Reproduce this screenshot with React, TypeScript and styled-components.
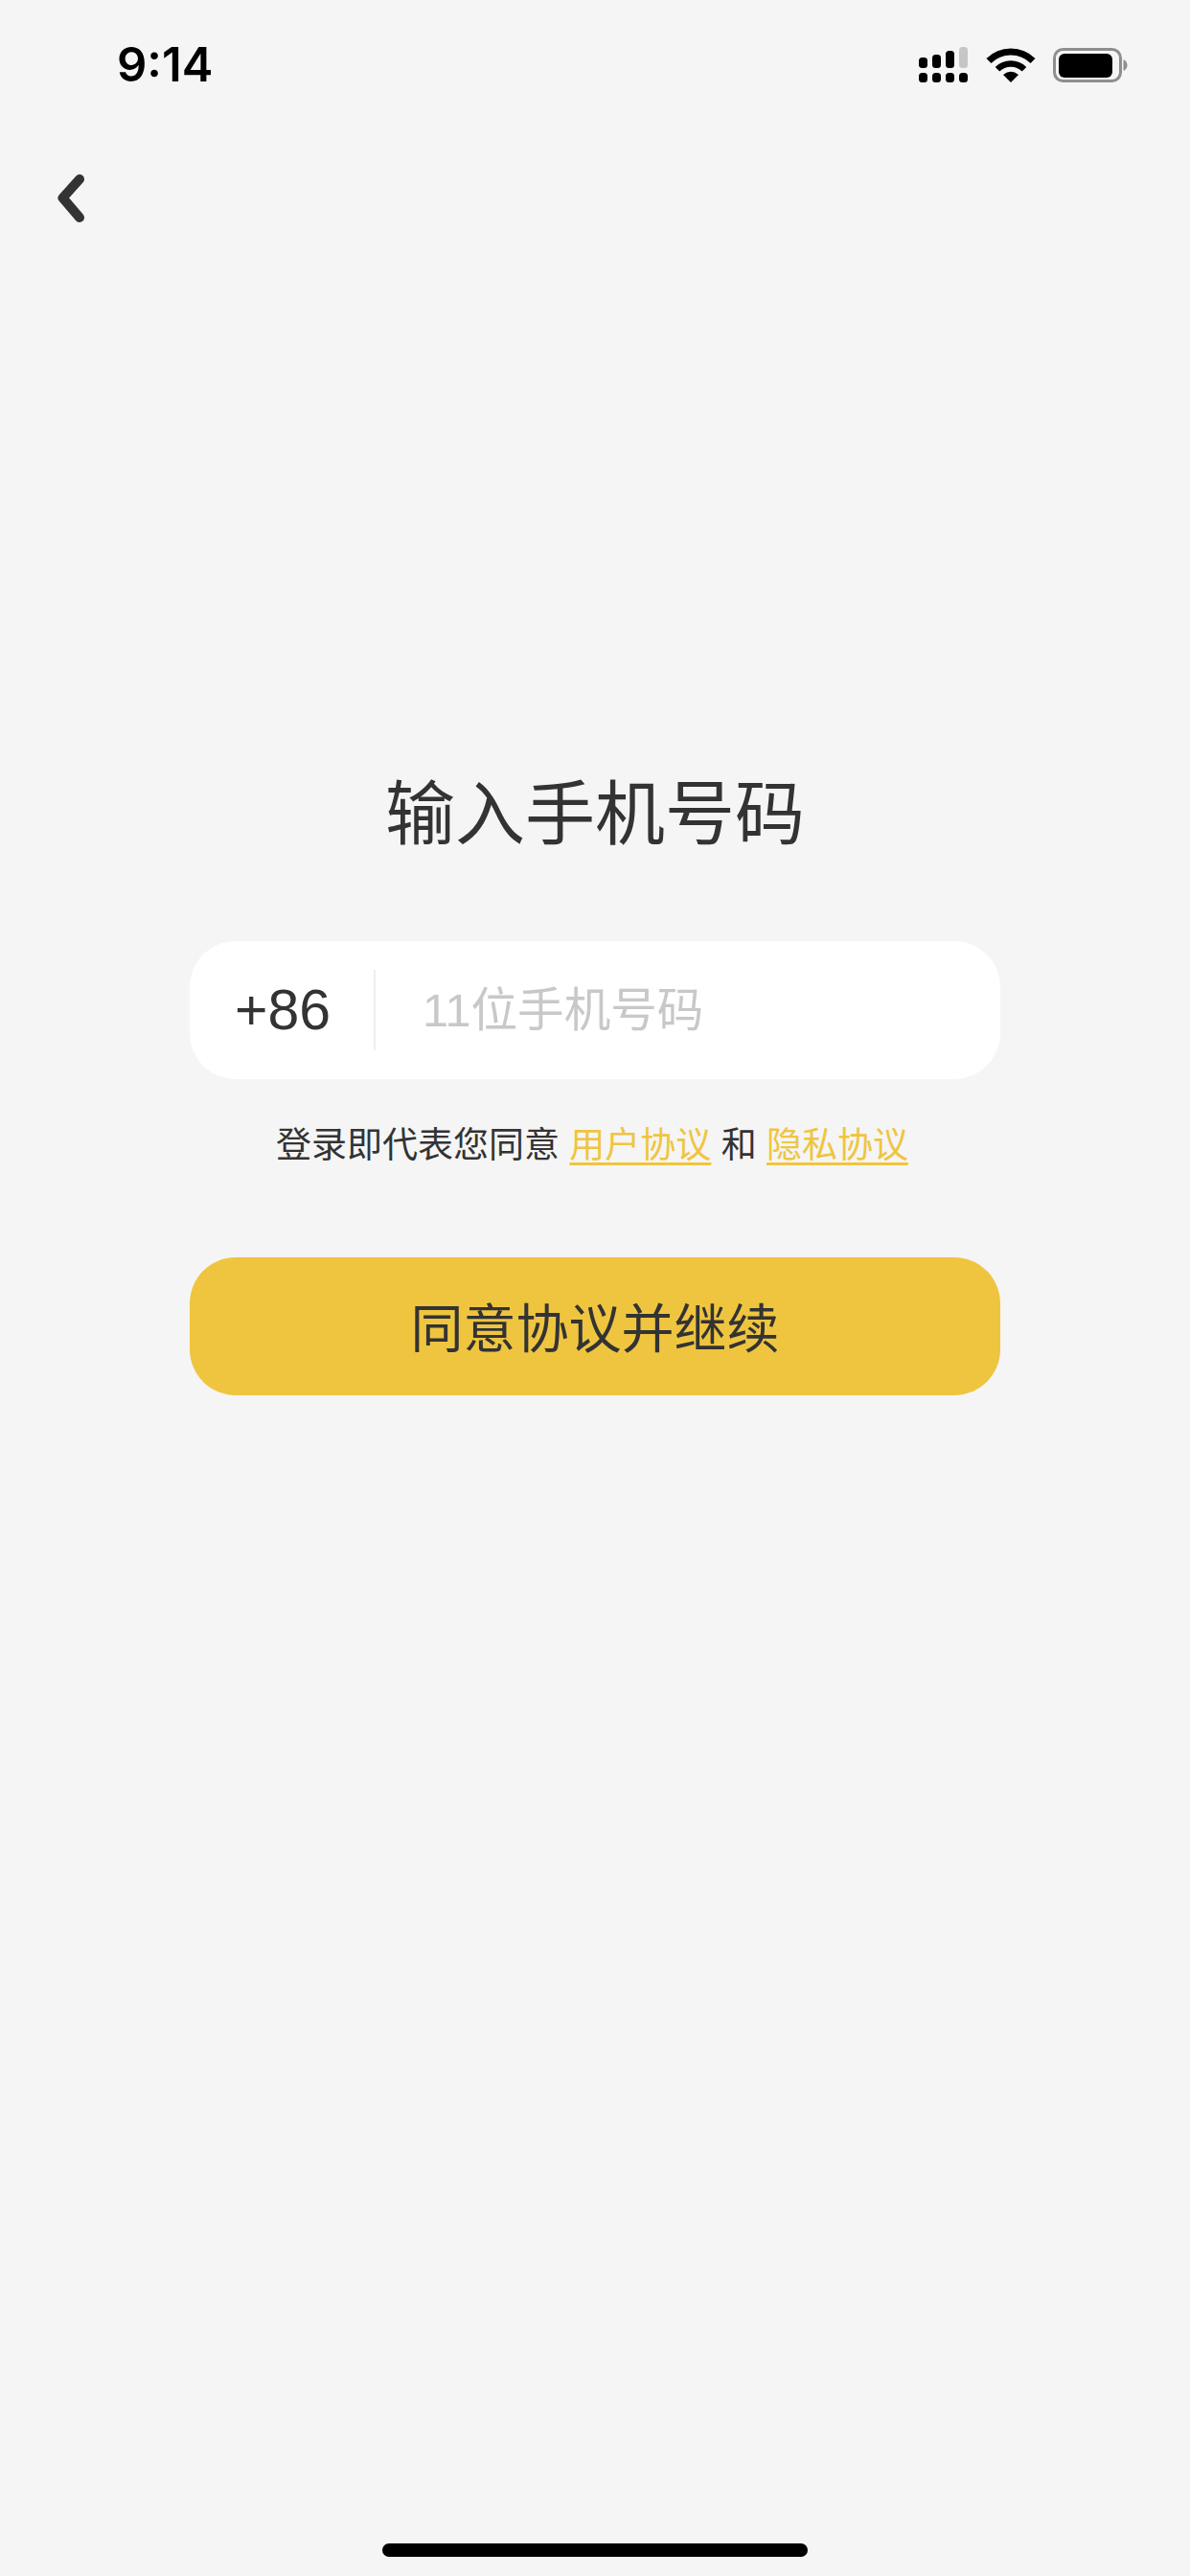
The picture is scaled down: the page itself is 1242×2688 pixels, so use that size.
import React, { useState } from 'react';
import styled, { createGlobalStyle } from 'styled-components';

const GlobalStyle = createGlobalStyle`
  html, body {
    margin: 0;
    padding: 0;
    background-color: #f5f5f5;
  }
  * {
    box-sizing: border-box;
  }
`;

const fontStack = `"Liberation Sans", "Noto Sans CJK SC", sans-serif`;

const Page = styled.div`
  width: 1242px;
  height: 2688px;
  display: flex;
  flex-direction: column;
  background-color: #f5f5f5;
  color: #333;
  font-family: ${fontStack};
`;

const StatusBar = styled.div`
  height: 132px;
  display: flex;
  justify-content: space-between;
  padding: 45px 64px 0 122px;
`;

const Time = styled.span`
  font-family: Inter, sans-serif;
  font-size: 49px;
  line-height: 46px;
  font-weight: 600;
  color: #000;
`;

const StatusIcons = styled.svg`
  width: 220px;
  height: 40px;
  margin-top: 1px;
`;

const BackButton = styled.button`
  width: 28px;
  height: 50px;
  margin: 50px 0 0 60px;
  padding: 0;
  border: none;
  background: none;
  cursor: pointer;

  svg {
    display: block;
  }
`;

const Content = styled.div`
  display: flex;
  flex-direction: column;
  padding: 0 198px;
`;

const Title = styled.h1`
  margin: 573px 0 0;
  font-size: 73px;
  line-height: 90px;
  font-weight: 400;
  text-align: center;
  color: #333;
`;

const PhoneField = styled.div`
  height: 144px;
  margin-top: 87px;
  display: flex;
  align-items: center;
  background-color: #fff;
  border-radius: 48px;
`;

const CountryCode = styled.span`
  width: 192px;
  padding-left: 47px;
  font-size: 59px;
  color: #333;
`;

const Divider = styled.div`
  width: 2px;
  height: 84px;
  background-color: #eee;
`;

const PhoneInput = styled.input`
  flex: 1;
  min-width: 0;
  margin-left: 47px;
  border: none;
  outline: none;
  background: transparent;
  font-family: ${fontStack};
  font-size: 48.6px;
  color: #333;

  &::placeholder {
    color: #c8c8c8;
    opacity: 1;
  }
`;

const Agreement = styled.p`
  margin: 45px 0 0;
  padding-right: 6px;
  font-size: 37px;
  line-height: 50px;
  text-align: center;
  color: #333;
`;

const AgreementLink = styled.a`
  color: #efc540;
  text-decoration: underline;
  text-underline-offset: 5px;
`;

const SubmitButton = styled.button`
  height: 144px;
  margin-top: 91px;
  padding: 0 0 4px;
  border: none;
  border-radius: 48px;
  background-color: #efc540;
  font-family: ${fontStack};
  font-size: 55px;
  color: #333;
  cursor: pointer;
`;

const HomeIndicator = styled.div`
  width: 444px;
  height: 14px;
  margin: auto auto 20px;
  border-radius: 7px;
  background-color: #000;
`;

const App: React.FC = () => {
  const [phone, setPhone] = useState('');

  return (
    <Page>
      <GlobalStyle />
      <StatusBar>
        <Time>9:14</Time>
        <StatusIcons viewBox="0 0 220 40">
          {/* signal */}
          <rect x="1" y="14" width="9" height="11" rx="3.5" />
          <rect x="15" y="11" width="9" height="14" rx="3.5" />
          <rect x="29" y="7" width="9" height="18" rx="3.5" />
          <rect x="43" y="3" width="9" height="22" rx="3.5" fill="#c6c6c6" />
          <rect x="1" y="30" width="9" height="10" rx="3.5" />
          <rect x="15" y="30" width="9" height="10" rx="3.5" />
          <rect x="29" y="30" width="9" height="10" rx="3.5" />
          <rect x="43" y="30" width="9" height="10" rx="3.5" />
          {/* wifi */}
          <g transform="translate(73 3)">
            <path d="M1 14.5A32.5 32.5 0 0 1 47 14.5" fill="none" stroke="#000" strokeWidth="7" />
            <path d="M10 23.2A20 20 0 0 1 38 23.2" fill="none" stroke="#000" strokeWidth="6.5" />
            <path d="M24 37L16 29Q24 22.5 32 29Z" />
          </g>
          {/* battery */}
          <rect x="142.5" y="5.5" width="69" height="33" rx="9" fill="none" stroke="#8e8e8e" strokeWidth="3" />
          <rect x="147" y="10" width="56" height="25" rx="6" />
          <path d="M214.5 16Q218.5 18 218.5 22Q218.5 26 214.5 28Z" fill="#8e8e8e" />
        </StatusIcons>
      </StatusBar>
      <BackButton aria-label="back">
        <svg width="28" height="50" viewBox="0 0 28 50">
          <path d="M23 5L5.500 24.500L23 45" fill="none" stroke="#333" strokeWidth="10" strokeLinecap="round" strokeLinejoin="round" />
        </svg>
      </BackButton>
      <Content>
        <Title>输入手机号码</Title>
        <PhoneField>
          <CountryCode>+86</CountryCode>
          <Divider />
          <PhoneInput
            type="tel"
            placeholder="11位手机号码"
            value={phone}
            onChange={(e) => setPhone(e.target.value)}
          />
        </PhoneField>
        <Agreement>
          登录即代表您同意 <AgreementLink>用户协议</AgreementLink> 和 <AgreementLink>隐私协议</AgreementLink>
        </Agreement>
        <SubmitButton>同意协议并继续</SubmitButton>
      </Content>
      <HomeIndicator />
    </Page>
  );
};

export default App;
